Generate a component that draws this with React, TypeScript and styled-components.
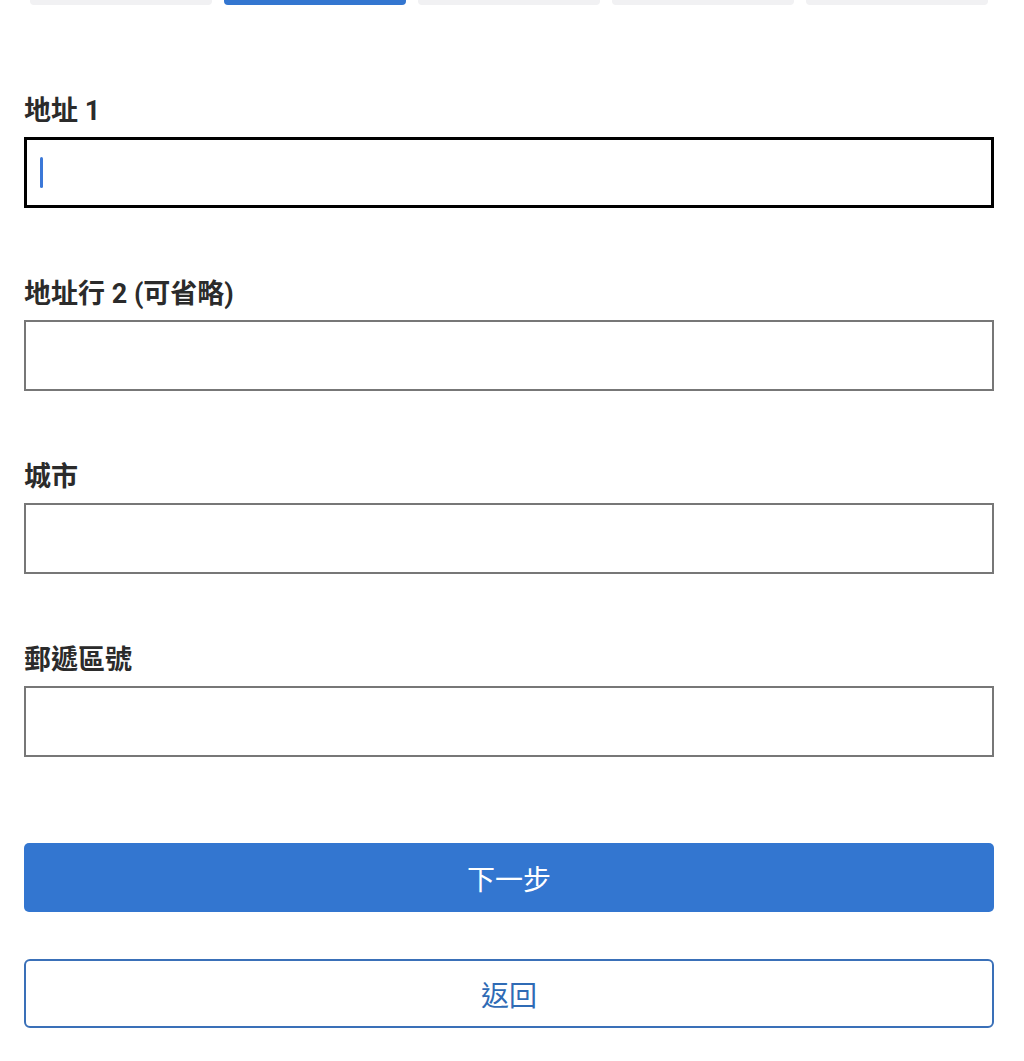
import React from "react";
import styled, { createGlobalStyle } from "styled-components";

const GlobalStyle = createGlobalStyle`
  html, body {
    margin: 0;
    padding: 0;
    background: #ffffff;
  }
  body {
    font-family: Roboto, "Noto Sans CJK TC", "Noto Sans", sans-serif;
    color: #2b2b2b;
  }
  * { box-sizing: border-box; }
`;

const Page = styled.div`
  width: 1024px;
  min-height: 1061px;
  padding: 0 30px 0 24px;
  display: flex;
  flex-direction: column;
`;

const Progress = styled.div`
  display: grid;
  grid-template-columns: repeat(5, 1fr);
  gap: 12px;
  padding: 0 6px;
`;

const Segment = styled.div<{ $active?: boolean }>`
  height: 5px;
  border-radius: 0 0 4px 4px;
  background: ${(p) => (p.$active ? "#3376d0" : "#f1f1f3")};
`;

const Form = styled.form`
  display: flex;
  flex-direction: column;
  gap: 70px;
  padding-top: 90px;
`;

const Field = styled.div`
  display: flex;
  flex-direction: column;
  gap: 10px;
`;

const Label = styled.label`
  font-size: 27px;
  line-height: 32px;
  font-weight: 700;
  color: #2b2b2b;
`;

const InputBox = styled.div<{ $focused?: boolean }>`
  height: 71px;
  display: flex;
  align-items: center;
  padding-left: ${(p) => (p.$focused ? "13px" : "14px")};
  border: ${(p) => (p.$focused ? "3px solid #000000" : "2px solid #777777")};
  background: #ffffff;
`;

const Caret = styled.span`
  width: 3px;
  height: 31px;
  border-radius: 2px;
  background: #3b78d8;
  flex: none;
`;

const TextInput = styled.input`
  flex: 1;
  height: 100%;
  border: none;
  outline: none;
  background: transparent;
  font-size: 24px;
  font-family: inherit;
  padding: 0 0 0 2px;
`;

const Actions = styled.div`
  display: flex;
  flex-direction: column;
  gap: 47px;
  margin-top: 86px;
`;

const Button = styled.button<{ $primary?: boolean }>`
  height: 69px;
  width: 100%;
  font-family: "Noto Sans CJK TC", "Noto Sans", sans-serif;
  font-size: 28px;
  font-weight: 400;
  border-radius: ${(p) => (p.$primary ? "5px" : "6px")};
  border: ${(p) => (p.$primary ? "none" : "2px solid #3a70b8")};
  background: ${(p) => (p.$primary ? "#3376d0" : "#ffffff")};
  color: ${(p) => (p.$primary ? "#ffffff" : "#2f6bb5")};
  cursor: pointer;
  padding: 0;
`;

const fields = [
  { id: "addr1", label: "地址 1", focused: true },
  { id: "addr2", label: "地址行 2 (可省略)" },
  { id: "city", label: "城市" },
  { id: "zip", label: "郵遞區號" },
];

export default function App() {
  return (
    <>
      <GlobalStyle />
      <Page>
        <Progress>
          {[0, 1, 2, 3, 4].map((i) => (
            <Segment key={i} $active={i === 1} />
          ))}
        </Progress>
        <Form onSubmit={(e) => e.preventDefault()}>
          {fields.map((f) => (
            <Field key={f.id}>
              <Label htmlFor={f.id}>{f.label}</Label>
              <InputBox $focused={f.focused}>
                {f.focused && <Caret />}
                <TextInput id={f.id} type="text" />
              </InputBox>
            </Field>
          ))}
        </Form>
        <Actions>
          <Button $primary type="button">下一步</Button>
          <Button type="button">返回</Button>
        </Actions>
      </Page>
    </>
  );
}
